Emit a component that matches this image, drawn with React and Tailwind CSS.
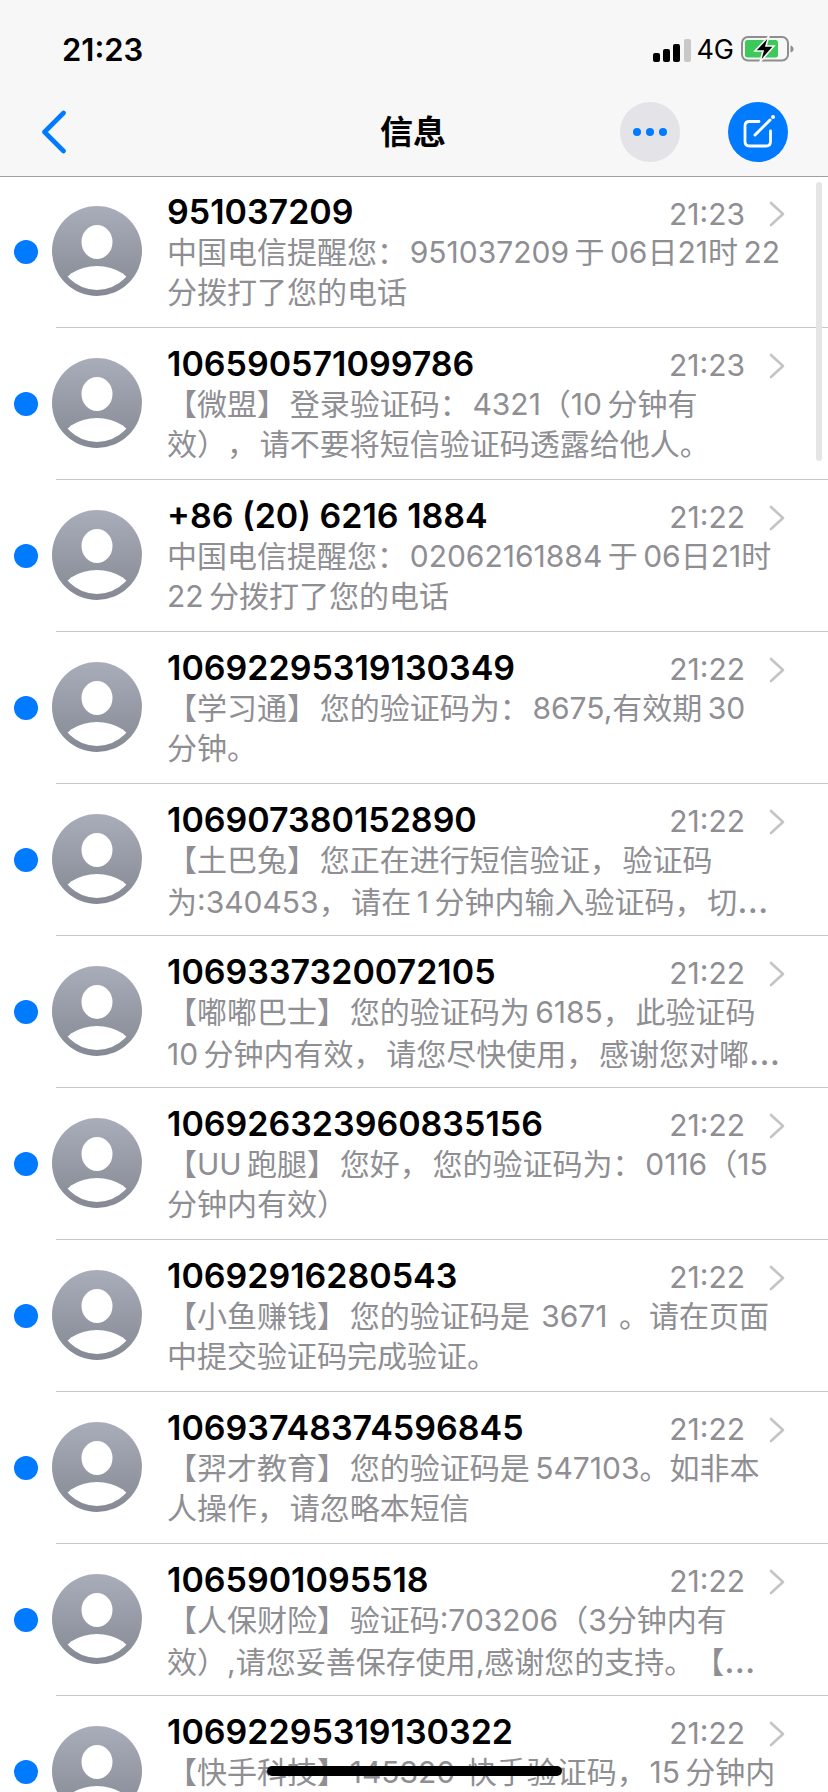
import React from "react";

// ^ marks the small gap iOS leaves between CJK and digits
const messages = [
  { name: "951037209", time: "21:23", lines: ["中国电信提醒您：^951037209^于^06日21时^22", "分拨打了您的电话"] },
  { name: "106590571099786", time: "21:23", lines: ["【微盟】登录验证码：^4321（10^分钟有", "效），请不要将短信验证码透露给他人。"] },
  { name: "+86 (20) 6216 1884", time: "21:22", lines: ["中国电信提醒您：^02062161884^于^06日21时", "22^分拨打了您的电话"] },
  { name: "10692295319130349", time: "21:22", lines: ["【学习通】您的验证码为：^8675,有效期^30", "分钟。"] },
  { name: "106907380152890", time: "21:22", lines: ["【土巴兔】您正在进行短信验证，验证码", "为:340453，请在^1^分钟内输入验证码，切…"] },
  { name: "1069337320072105", time: "21:22", lines: ["【嘟嘟巴士】您的验证码为^6185，此验证码", "10^分钟内有效，请您尽快使用，感谢您对嘟…"] },
  { name: "106926323960835156", time: "21:22", lines: ["【UU^跑腿】您好，您的验证码为：^0116（15", "分钟内有效）"] },
  { name: "10692916280543", time: "21:22", lines: ["【小鱼赚钱】您的验证码是 3671 。请在页面", "中提交验证码完成验证。"] },
  { name: "10693748374596845", time: "21:22", lines: ["【羿才教育】您的验证码是^547103。如非本", "人操作，请忽略本短信"] },
  { name: "1065901095518", time: "21:22", lines: ["【人保财险】验证码:703206（3分钟内有", "效）,请您妥善保存使用,感谢您的支持。【…"] },
  { name: "10692295319130322", time: "21:22", lines: ["【快手科技】145320 快手验证码，15^分钟内", ""] },
];

function spaced(line) {
  return line
    .replaceAll("：^", "：\u200a")
    .replaceAll("^", "\u2009")
    .replaceAll("，", "，\u200a")
    .replaceAll("】", "】\u200a");
}

function Avatar() {
  return (
    <svg width="90" height="90" viewBox="0 0 90 90" className="shrink-0 mb-[2px]">
      <defs>
        <linearGradient id="avatarFill" x1="0" y1="0" x2="0" y2="1">
          <stop offset="0" stopColor="#a8adb9" />
          <stop offset="1" stopColor="#858994" />
        </linearGradient>
        <clipPath id="avatarClip">
          <circle cx="45" cy="45" r="39" />
        </clipPath>
      </defs>
      <circle cx="45" cy="45" r="45" fill="url(#avatarFill)" />
      <ellipse cx="45" cy="36" rx="15.5" ry="17" fill="#fff" />
      <ellipse cx="45" cy="85" rx="36" ry="25" fill="#fff" clipPath="url(#avatarClip)" />
    </svg>
  );
}

function StatusIcons() {
  return (
    <div className="flex items-end">
      <div className="flex items-end gap-[3px]">
        <div className="w-[7px] h-[9px] rounded-[2px] bg-black" />
        <div className="w-[7px] h-[13px] rounded-[2px] bg-black" />
        <div className="w-[7px] h-[18px] rounded-[2px] bg-black" />
        <div className="w-[7px] h-[23px] rounded-[2px] bg-[#c8c8c8] ml-[1px]" />
      </div>
      <span className="ml-[5px] text-[27px] leading-[24px] text-black">4G</span>
      <svg width="54" height="26" viewBox="0 0 54 26" className="ml-[7px]">
        <rect x="1" y="1" width="46" height="23.5" rx="6" fill="none" stroke="#8e8e8e" strokeWidth="2" />
        <rect x="4" y="4" width="33" height="17.5" rx="2.5" fill="#3dc85c" />
        <path d="M49.5 9.5 q3 1 3 3.5 q0 2.5 -3 3.5 z" fill="#8e8e8e" />
        <path d="M28 0 L14 15 H22 L19 26 L33 10 H25 Z" fill="#000" stroke="#f7f7f7" strokeWidth="1.6" />
      </svg>
    </div>
  );
}

function Row({ item, first }) {
  return (
    <div className={first ? "ml-[56px] h-[151px] border-b border-[#c8c8cb] flex items-center" : "ml-[56px] h-[152px] border-b border-[#c8c8cb] flex items-center"}>
      <div className="-ml-[42px] w-[24px] h-[24px] rounded-full bg-[#007aff] shrink-0" />
      <div className="ml-[14px]">
        <Avatar />
      </div>
      <div className="ml-[25px] w-[618px] shrink-0 flex flex-col">
        <div className="flex items-center h-[40px]">
          <span className="text-[34px] leading-[38px] font-semibold text-black flex-1 whitespace-nowrap">{item.name}</span>
          <span className="text-[30px] leading-[38px] text-[#8e8e93] mt-[3px]">{item.time}</span>
          <svg width="16" height="26" viewBox="0 0 16 26" className="ml-[24px] mt-[4px]">
            <path d="M2 2 L14 13 L2 24" fill="none" stroke="#c4c4c7" strokeWidth="2.6" strokeLinecap="round" strokeLinejoin="round" />
          </svg>
        </div>
        {item.lines.map((line, i) => (
          <div key={i} className="h-[40px] text-[30px] leading-[40px] text-[#8e8e93] whitespace-nowrap [word-spacing:3px] [text-autospace:no-autospace] [text-spacing-trim:space-all]">
            {line.endsWith("…") ? (
              <>
                {spaced(line.slice(0, -1))}
                <span className="text-[36px]">…</span>
              </>
            ) : (
              spaced(line)
            )}
          </div>
        ))}
      </div>
    </div>
  );
}

export default function App() {
  return (
    <div lang="zh-CN" className="relative w-[828px] h-[1792px] overflow-hidden bg-white font-['Inter','Noto_Sans_CJK_SC',sans-serif]">
      {/* Header */}
      <div className="h-[177px] bg-[#f7f7f7] border-b border-[#a0a0a2] flex flex-col">
        <div className="h-[102px] flex items-start justify-between pt-[31px] pl-[62px] pr-[33px]">
          <span className="text-[31px] leading-[38px] font-semibold text-black">21:23</span>
          <div className="pt-[5px]">
            <StatusIcons />
          </div>
        </div>
        <div className="flex items-center h-[60px] pl-[41px] pr-[40px]">
          <svg width="26" height="44" viewBox="0 0 26 44">
            <path d="M22.5 3 L3.5 22 L22.5 41" fill="none" stroke="#007aff" strokeWidth="4.6" strokeLinecap="round" strokeLinejoin="round" />
          </svg>
          <div className="flex-1 text-center text-[33px] leading-[60px] font-semibold text-black ml-[139px]">信息</div>
          <div className="w-[60px] h-[60px] rounded-full bg-[#e3e3e8] flex items-center justify-center gap-[5px]">
            <div className="w-[8px] h-[8px] rounded-full bg-[#007aff]" />
            <div className="w-[8px] h-[8px] rounded-full bg-[#007aff]" />
            <div className="w-[8px] h-[8px] rounded-full bg-[#007aff]" />
          </div>
          <div className="ml-[48px] w-[60px] h-[60px] rounded-full bg-[#007aff] flex items-center justify-center">
            <svg width="36" height="36" viewBox="0 0 36 36">
              <path d="M19 7.5 H9.5 Q5 7.5 5 12 V27.5 Q5 32 9.5 32 H26 Q30.5 32 30.5 27.5 V17" fill="none" stroke="#fff" strokeWidth="2.8" strokeLinecap="round" />
              <path d="M15 21 L30 6" fill="none" stroke="#fff" strokeWidth="3" strokeLinecap="round" />
              <circle cx="33" cy="3" r="2" fill="#fff" />
            </svg>
          </div>
        </div>
      </div>

      {/* Messages */}
      <div>
        {messages.map((item, i) => (
          <Row key={i} item={item} first={i === 0} />
        ))}
      </div>

      {/* Scrollbar */}
      <div className="absolute left-[816px] top-[182px] w-[6px] h-[279px] rounded-full bg-[#e5e5e5]" />
      {/* Home indicator */}
      <div className="absolute left-[267px] top-[1766px] w-[295px] h-[10px] rounded-full bg-black" />
    </div>
  );
}
